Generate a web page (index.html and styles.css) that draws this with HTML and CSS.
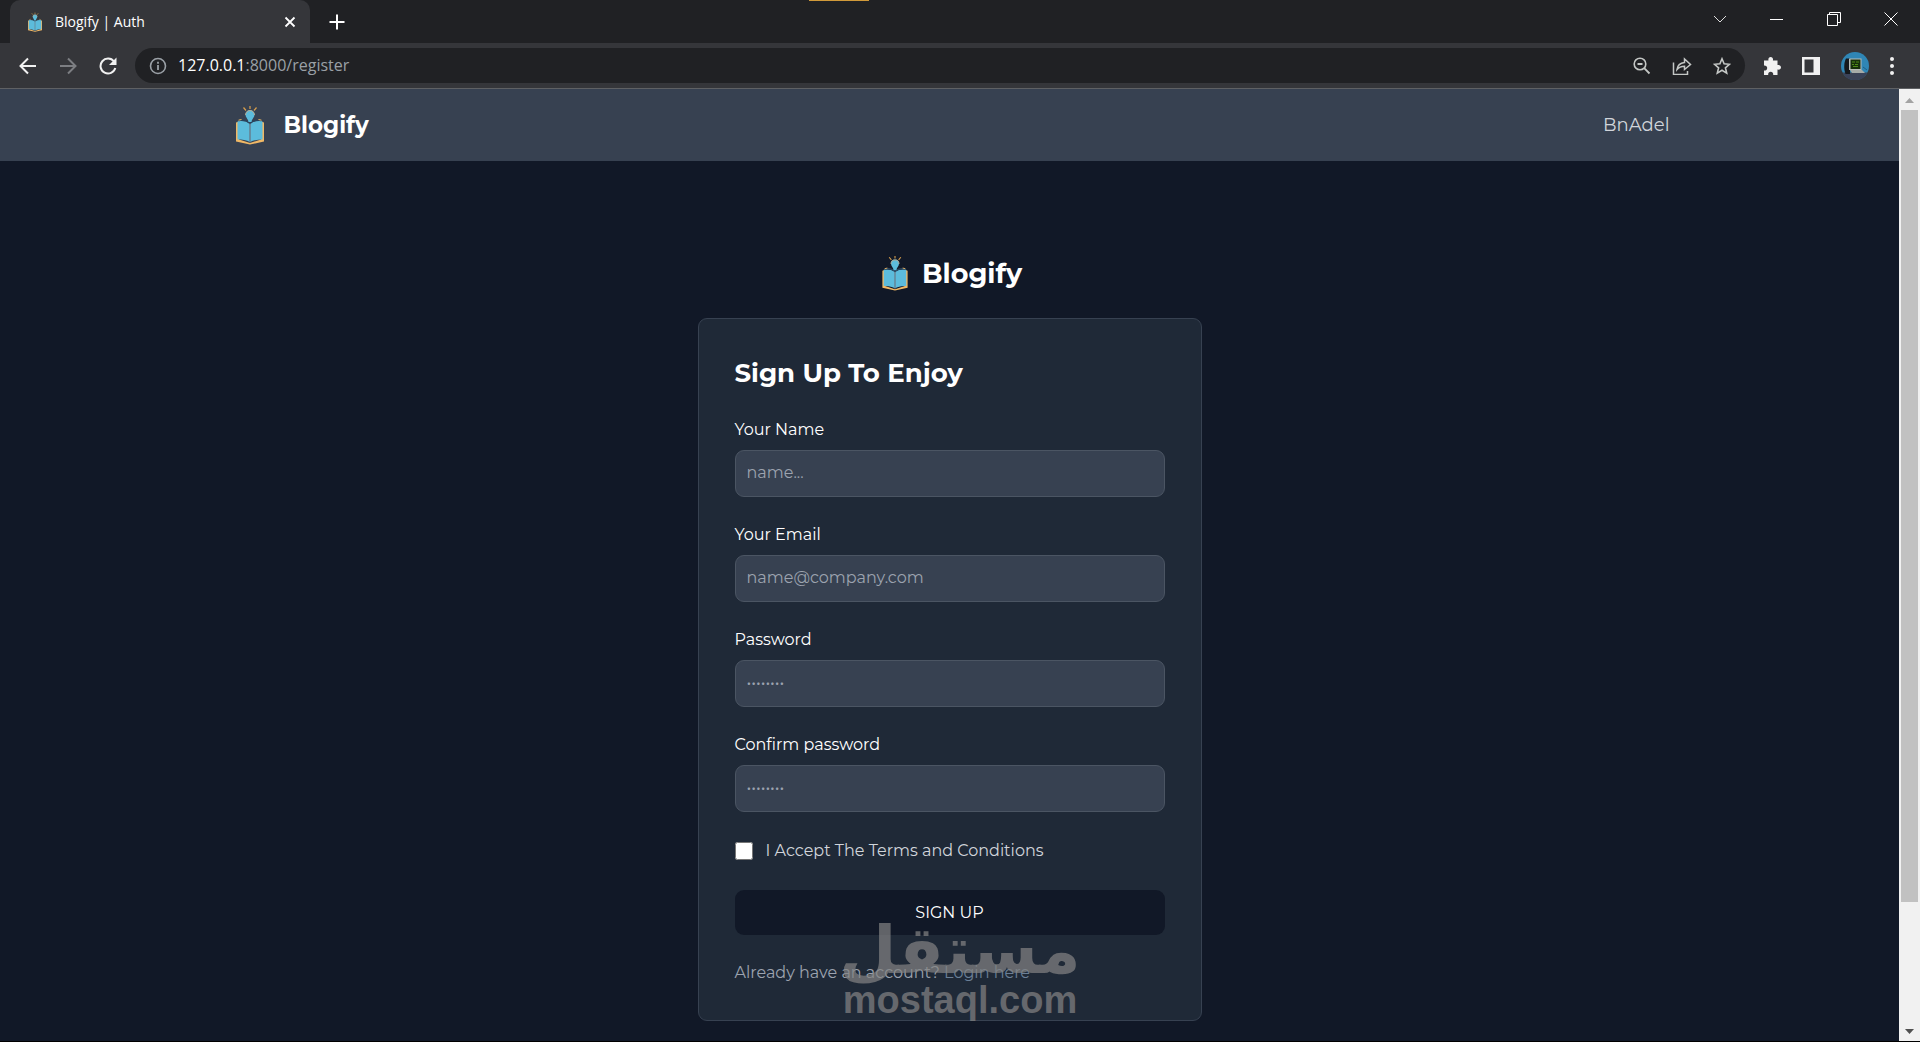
FILE: index.html
```html
<!DOCTYPE html>
<html lang="en">
<head>
    <meta charset="UTF-8">
    <meta name="viewport" content="width=device-width, initial-scale=1.0">
    <title>Blogify | Auth</title>
    <link rel="stylesheet" href="styles.css">
</head>
<body>
    <!-- Shared logo -->
    <svg class="sprite" aria-hidden="true">
        <symbol id="logo" viewBox="0 0 40 40">
            <path d="M6 17.500 9 16.500v18l11 3.500 11-3.500v-18l3 1v19L20 39.500 6 36.500z" fill="#f0b866"/>
            <path d="M7.500 16.500c4-1 8.500-.3 12.500 2 4-2.300 8.500-3 12.500-2v18c-4.500 0-9 .6-12.500 2.500-3.500-1.900-8-2.500-12.500-2.500z" fill="#5cbcdc"/>
            <path d="M9 15.500c4.500-1 8 0 11 3 3-3 6.500-4 11-3" fill="none" stroke="#29455f" stroke-width="1.300"/>
            <path d="M8.500 15.200l3-.7M31.500 15.200l-3-.7" stroke="#f0b866"/>
            <path d="M20 18.500v19" stroke="#687683" stroke-width="1.300"/>
            <path d="M15.500 9.500a4.500 4.500 0 0 1 9 0c0 3-2.500 4-3 7.500h-3c-.5-3.500-3-4.500-3-7.500z" fill="#5cbcdc"/>
            <path d="M15.500 10a4.500 4.500 0 0 1 9 0" fill="none" stroke="#b9a98e"/>
            <path d="M20 1v3M13.500 2.500l2.500 3M26.500 2.500l-2.500 3" stroke="#d99f4c" stroke-width="1.200"/>
        </symbol>
    </svg>

    <!-- Browser tabs -->
    <div class="tab-strip">
        <div class="tab">
            <svg class="favicon"><use href="#logo"/></svg>
            <span class="tab-title">Blogify | Auth</span>
            <button class="icon-btn" aria-label="Close tab">
                <svg width="12" height="12" viewBox="0 0 12 12"><path d="M1.500 1.500l9 9M10.500 1.500l-9 9" stroke="#fff" stroke-width="1.800"/></svg>
            </button>
        </div>
        <button class="icon-btn new-tab" aria-label="New tab">
            <svg width="16" height="16" viewBox="0 0 16 16"><path d="M8 .5v15M.5 8h15" stroke="#fff" stroke-width="2"/></svg>
        </button>
        <div class="drag-bar"><span></span></div>
        <div class="window-buttons">
            <button class="icon-btn" aria-label="Search tabs">
                <svg width="14" height="14" viewBox="0 0 14 14"><path d="M1 4l6 6 6-6" fill="none" stroke="#ddd"/></svg>
            </button>
            <button class="icon-btn" aria-label="Minimize">
                <svg width="14" height="14" viewBox="0 0 14 14"><path d="M0 7.500h13" stroke="#fff"/></svg>
            </button>
            <button class="icon-btn" aria-label="Restore">
                <svg width="14" height="14" viewBox="0 0 14 14"><path d="M.5 2.500h10v11H.5zM2.500 2.500V.5h11v10h-3" fill="none" stroke="#fff"/></svg>
            </button>
            <button class="icon-btn" aria-label="Close">
                <svg width="14" height="14" viewBox="0 0 14 14"><path d="M.5.5l13 13M13.500.5l-13 13" stroke="#fff"/></svg>
            </button>
        </div>
    </div>

    <!-- Browser toolbar -->
    <div class="toolbar">
        <button class="icon-btn" aria-label="Back">
            <svg width="18" height="18" viewBox="0 0 18 18"><path d="M17 9H2M9 1.500L1.500 9 9 16.500" fill="none" stroke="#f1f1f1" stroke-width="2"/></svg>
        </button>
        <button class="icon-btn" aria-label="Forward">
            <svg width="18" height="18" viewBox="0 0 18 18"><path d="M1 9h15M9 1.500L16.500 9 9 16.500" fill="none" stroke="#7c7e82" stroke-width="2"/></svg>
        </button>
        <button class="icon-btn" aria-label="Reload">
            <svg width="18" height="18" viewBox="0 0 18 18"><path d="M15 4.500A7.500 7.500 0 1 0 16.300 11" fill="none" stroke="#f1f1f1" stroke-width="2"/><path d="M17.500.5v7.500H10z" fill="#f1f1f1"/></svg>
        </button>
        <div class="address-bar">
            <svg width="18" height="18" viewBox="0 0 18 18"><circle cx="9" cy="9" r="7.500" fill="none" stroke="#9aa0a6" stroke-width="1.600"/><path d="M9 8v5M9 4.800v2" stroke="#9aa0a6" stroke-width="1.800"/></svg>
            <span class="url"><b>127.0.0.1</b>:8000/register</span>
            <button class="icon-btn" aria-label="Zoom">
                <svg width="18" height="18" viewBox="0 0 18 18"><circle cx="7" cy="7" r="5.800" fill="none" stroke="#c4c7c5" stroke-width="1.600"/><path d="M4.500 7h5M11.200 11.200l5.300 5.300" stroke="#c4c7c5" stroke-width="1.800"/></svg>
            </button>
            <button class="icon-btn" aria-label="Share">
                <svg width="20" height="18" viewBox="0 0 20 18"><path d="M1.500 5.500v12h14V14M5 12.500c.5-4 3-6.500 7.500-7V2l6 5.500-6 5v-3.300c-3.500 0-5.700 1-7.500 3.300z" fill="none" stroke="#c4c7c5" stroke-width="1.500"/></svg>
            </button>
            <button class="icon-btn" aria-label="Bookmark">
                <svg width="18" height="18" viewBox="0 0 18 18"><path d="M9 1.800l2.100 5 5.400.5-4.100 3.500 1.300 5.300L9 13.300l-4.700 2.800 1.300-5.300L1.500 7.300l5.400-.5z" fill="none" stroke="#c4c7c5" stroke-width="1.600"/></svg>
            </button>
        </div>
        <div class="extensions">
            <button class="icon-btn" aria-label="Extensions">
                <svg width="18" height="18" viewBox="0 0 18 18"><path d="M1 3.500h4.500C5 1.500 6 0 7.700 0s2.700 1.500 2.200 3.500H14.500V8c2-.4 3.500.6 3.500 2.300s-1.500 2.700-3.500 2.200V18h-4.300c.2-2-.8-3.200-2.500-3.200S5 16 5.200 18H1v-4.500c2 .1 3.200-.9 3.200-2.600S3 8.300 1 8.400z" fill="#f1f1f1"/></svg>
            </button>
            <button class="icon-btn" aria-label="Side panel">
                <svg width="18" height="18" viewBox="0 0 18 18"><path d="M0 0h18v18H0zM2.500 2.500v13h9v-13z" fill="#f1f1f1" fill-rule="evenodd"/></svg>
            </button>
            <button class="icon-btn" aria-label="Profile">
                <svg width="28" height="28" viewBox="0 0 28 28">
                    <circle cx="14" cy="14" r="14" fill="#2f86b5"/>
                    <path d="M1.500 20.500h25a14 14 0 0 1-25 0z" fill="#3a4258"/>
                    <path d="M5 6.500h4V22H4.500C2.500 17 3 10 5 6.500z" fill="#15191d"/>
                    <path d="M8 6.500h12.500V18H8z" fill="#b9bdb9"/>
                    <path d="M9.500 7.500h10v9.500h-10z" fill="#16300b"/>
                    <path d="M11 10h3m1 0h3M11 12.500h2m1 0h3M12 14.500h5" stroke="#4f8a18" stroke-width="1.200"/>
                    <path d="M9 18h12l3 3H11z" fill="#a5aaa8"/>
                    <path d="M22 15l4 3" stroke="#1d5f85"/>
                </svg>
            </button>
            <button class="icon-btn" aria-label="Menu">
                <svg width="4" height="18" viewBox="0 0 4 18"><path d="M2 2h.01M2 9h.01M2 16h.01" stroke="#f1f1f1" stroke-width="4" stroke-linecap="round"/></svg>
            </button>
        </div>
    </div>

    <div class="viewport">
        <div class="page">
            <nav class="navbar">
                <div class="container">
                    <a href="#" class="brand">
                        <svg class="brand-logo"><use href="#logo"/></svg>
                        <span>Blogify</span>
                    </a>
                    <a href="#" class="nav-link">BnAdel</a>
                </div>
            </nav>

            <main class="auth">
                <a href="#" class="auth-brand">
                    <svg class="auth-logo"><use href="#logo"/></svg>
                    <span>Blogify</span>
                </a>
                <form class="card">
                    <h1>Sign Up To Enjoy</h1>
                    <div class="form-group">
                        <label for="name">Your Name</label>
                        <input type="text" id="name" placeholder="name...">
                    </div>
                    <div class="form-group">
                        <label for="email">Your Email</label>
                        <input type="email" id="email" placeholder="name@company.com">
                    </div>
                    <div class="form-group">
                        <label for="password">Password</label>
                        <input type="password" id="password" placeholder="••••••••">
                    </div>
                    <div class="form-group">
                        <label for="confirm-password">Confirm password</label>
                        <input type="password" id="confirm-password" placeholder="••••••••">
                    </div>
                    <div class="terms">
                        <input type="checkbox" id="terms">
                        <label for="terms">I Accept The Terms and Conditions</label>
                    </div>
                    <button type="submit" class="btn">SIGN UP</button>
                    <p class="switch-link">Already have an account? <a href="#">Login here</a></p>
                </form>
            </main>
        </div>

        <div class="scrollbar">
            <svg width="21" height="21" viewBox="0 0 21 21"><path d="M6 14l4.500-5 4.500 5z" fill="#a3a3a3"/></svg>
            <div class="scroll-track"><div class="scroll-thumb"></div></div>
            <svg width="21" height="21" viewBox="0 0 21 21"><path d="M6 9l4.500 5L15 9z" fill="#505050"/></svg>
        </div>
    </div>

    <div class="watermark">
        <span class="watermark-ar" lang="ar" dir="rtl">مستقل</span>
        <span class="watermark-en">mostaql.com</span>
    </div>
</body>
</html>
```
FILE: styles.css
```css
* {
    margin: 0;
    padding: 0;
    box-sizing: border-box;
}

body {
    font-family: Montserrat, Inter, sans-serif;
    font-size: 16px;
    line-height: 23px;
    background: #111827;
    min-height: 100vh;
    color: #fff;
    display: flex;
    flex-direction: column;
    position: relative;
}

svg {
    display: block;
    flex-shrink: 0;
}

a {
    color: inherit;
    text-decoration: none;
}

.sprite {
    position: absolute;
    width: 0;
    height: 0;
}

.icon-btn {
    background: none;
    border: none;
    cursor: pointer;
}

/* Browser tabs */
.tab-strip {
    display: flex;
    height: 43px;
    background: #202124;
    font-family: "Segoe UI", "Open Sans", sans-serif;
    font-size: 14px;
}

.tab {
    display: flex;
    align-items: center;
    width: 300px;
    margin-left: 10px;
    padding: 0 14px 0 15px;
    background: #35363a;
    border-radius: 10px 10px 0 0;
}

.favicon {
    width: 20px;
    height: 20px;
}

.tab-title {
    flex: 1;
    margin-left: 10px;
}

.new-tab {
    margin-left: 19px;
}

.drag-bar {
    flex: 1;
    padding-left: 464px;
}

.drag-bar span {
    display: block;
    width: 60px;
    height: 1px;
    background: #d19a3a;
}

.window-buttons {
    display: flex;
    align-items: center;
    gap: 43px;
    height: 37px;
    padding-right: 22px;
}

/* Browser toolbar */
.toolbar {
    display: flex;
    align-items: center;
    gap: 22px;
    height: 46px;
    padding: 0 26px 0 19px;
    background: #35363a;
    border-bottom: 1px solid #5f6164;
}

.address-bar {
    display: flex;
    align-items: center;
    flex: 1;
    gap: 21px;
    height: 35px;
    margin-left: -4px;
    padding: 0 14px;
    background: #202124;
    border-radius: 18px;
}

.url {
    flex: 1;
    margin-left: -10px;
    font-family: "Segoe UI", "Open Sans", sans-serif;
    font-size: 16px;
    color: #9aa0a6;
}

.url b {
    font-weight: 400;
    color: #fff;
}

.extensions {
    display: flex;
    align-items: center;
    gap: 21px;
    margin-left: -4px;
}

/* Page */
.viewport {
    display: flex;
    flex: 1;
    border-bottom: 1px solid #000;
}

.page {
    flex: 1;
}

.navbar {
    background: #374151;
}

.container {
    display: flex;
    align-items: center;
    justify-content: space-between;
    max-width: 1440px;
    height: 72px;
    margin: 0 auto;
}

.brand {
    display: flex;
    align-items: center;
    gap: 14px;
    font-size: 23px;
    font-weight: 700;
}

.brand-logo {
    width: 40px;
    height: 40px;
}

.nav-link {
    font-size: 18px;
    color: #d1d5db;
}

.auth {
    display: flex;
    flex-direction: column;
    align-items: center;
    padding: 94px 24px 20px;
}

.auth-brand {
    display: flex;
    align-items: center;
    gap: 9px;
    margin-bottom: 27px;
    font-size: 27px;
    font-weight: 700;
}

.auth-logo {
    width: 36px;
    height: 36px;
}

.card {
    display: flex;
    flex-direction: column;
    gap: 26px;
    width: 100%;
    max-width: 504px;
    padding: 36px;
    background: #1f2937;
    border: 1px solid #374151;
    border-radius: 9px;
}

.card h1 {
    font-size: 26px;
    line-height: 37px;
    font-weight: 700;
}

.form-group label {
    display: block;
    margin-bottom: 9px;
}

.form-group input {
    display: block;
    width: 100%;
    height: 47px;
    padding: 0 11px 2px;
    background: #374151;
    border: 1px solid #4b5563;
    border-radius: 9px;
    color: #fff;
    font: inherit;
}

.form-group input::placeholder {
    color: #9ca3af;
}

.terms {
    display: flex;
    align-items: center;
    gap: 13px;
    line-height: 26px;
    color: #d1d5db;
}

.terms input {
    width: 18px;
    height: 18px;
}

.btn {
    height: 45px;
    background: #111827;
    border: none;
    border-radius: 9px;
    color: #fff;
    font: inherit;
    cursor: pointer;
}

.switch-link {
    color: #9ca3af;
}

.switch-link a {
    color: #6b7f96;
}

/* Scrollbar */
.scrollbar {
    display: flex;
    flex-direction: column;
    width: 21px;
    background: #f1f1f1;
}

.scroll-track {
    flex: 1;
    padding: 0 2px;
}

.scroll-thumb {
    height: 87%;
    background: #c1c1c1;
}

/* Watermark */
.watermark {
    position: absolute;
    left: 0;
    right: 0;
    bottom: 27px;
    display: flex;
    flex-direction: column;
    align-items: center;
    color: #848484;
    opacity: 0.7;
    pointer-events: none;
}

.watermark-ar {
    font-family: "DejaVu Sans", sans-serif;
    font-size: 66px;
    font-weight: 700;
    line-height: 68px;
}

.watermark-en {
    font-family: "Liberation Sans", Arial, sans-serif;
    font-size: 38px;
    font-weight: 700;
    line-height: 30px;
}
```
